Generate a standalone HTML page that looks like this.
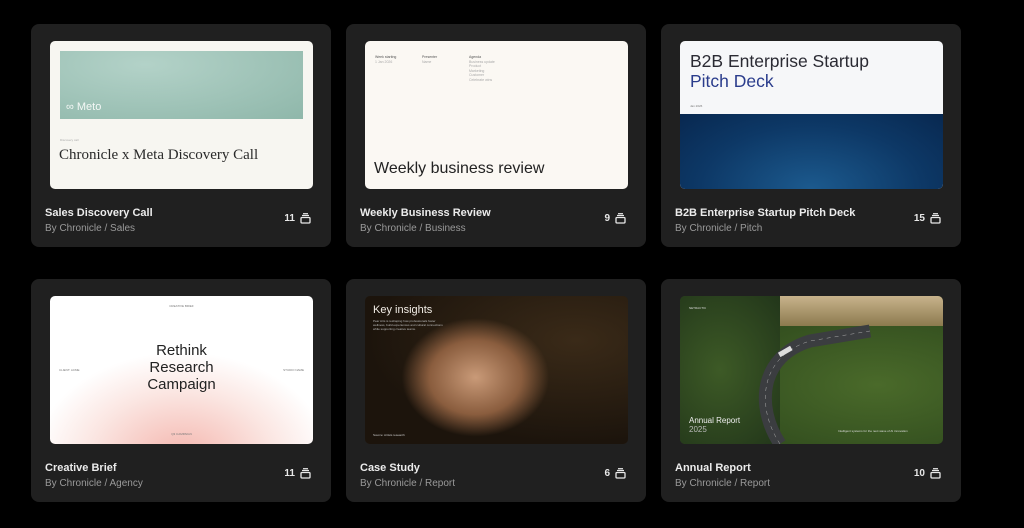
<!DOCTYPE html>
<html><head><meta charset="utf-8"><style>
*{margin:0;padding:0;box-sizing:border-box}
body{width:1024px;height:528px;background:#000;font-family:"Liberation Sans",sans-serif;position:relative;overflow:hidden}
.card{position:absolute;width:300px;height:223px;background:#202020;border-radius:8px}
.th{position:absolute;left:19px;top:17px;width:263px;height:148px;border-radius:5px;overflow:hidden}
.t{position:absolute;left:14px;top:183px;color:#ececec;font-size:11px;font-weight:bold}
.s{position:absolute;left:14px;top:199px;color:#9a9a9a;font-size:10px}
.n{position:absolute;right:20px;top:189px;color:#e8e8e8;font-size:10px;font-weight:bold;display:flex;align-items:center;gap:5px}
.abs{position:absolute}
</style></head><body>
<svg width="0" height="0" style="position:absolute"><defs><g id="ic"><rect x="1" y="4.5" width="9" height="5.5" rx="1" fill="none" stroke="#e8e8e8" stroke-width="1.3"/><line x1="2" y1="2.5" x2="9" y2="2.5" stroke="#e8e8e8" stroke-width="1.2"/><line x1="3" y1="0.7" x2="8" y2="0.7" stroke="#e8e8e8" stroke-width="1.2"/></g></defs></svg>

<div class="card" style="left:31px;top:24px">
 <div class="th" style="background:#f7f6f1">
  <div class="abs" style="left:10px;top:10px;width:243px;height:68px;background:radial-gradient(ellipse at 35% 20%,#b3d2c8,#8fb7aa)"></div>
  <div class="abs" style="left:16px;top:60px;color:#f4f8f6;font-size:11px">∞ Meto</div>
  <div class="abs" style="left:10px;top:97px;color:#aaa;font-size:3px">Discovery call</div>
  <div class="abs" style="left:9px;top:106px;color:#2a2a2a;font-size:15px;font-family:'Liberation Serif',serif;white-space:nowrap">Chronicle x Meta Discovery Call</div>
 </div>
 <div class="t">Sales Discovery Call</div><div class="s">By Chronicle / Sales</div>
 <div class="n">11 <svg width="11" height="11"><use href="#ic"/></svg></div>
</div>

<div class="card" style="left:346px;top:24px">
 <div class="th" style="background:#fbf8f3">
  <div class="abs" style="left:10px;top:14px;font-size:3.5px;color:#555;line-height:4.5px">Week starting<br><span style="color:#aaa">1 Jan 2026</span></div>
  <div class="abs" style="left:57px;top:14px;font-size:3.5px;color:#555;line-height:4.5px">Presenter<br><span style="color:#aaa">Name</span></div>
  <div class="abs" style="left:104px;top:14px;font-size:3.5px;color:#555;line-height:4.5px">Agenda<br><span style="color:#aaa">Business update<br>Product<br>Marketing<br>Customer<br>Celebrate wins</span></div>
  <div class="abs" style="left:9px;top:119px;color:#222;font-size:16px;white-space:nowrap">Weekly business review</div>
 </div>
 <div class="t">Weekly Business Review</div><div class="s">By Chronicle / Business</div>
 <div class="n">9 <svg width="11" height="11"><use href="#ic"/></svg></div>
</div>

<div class="card" style="left:661px;top:24px">
 <div class="th" style="background:#f6f7f9">
  <div class="abs" style="left:0;top:73px;width:263px;height:75px;background:radial-gradient(ellipse at 50% 100%,#1c5a8e,#0d3866 60%,#082850)"></div>
  <div class="abs" style="left:10px;top:10px;font-size:17.5px;line-height:20px;color:#2a2a33;white-space:nowrap">B2B Enterprise Startup<br><span style="color:#2a3c8c">Pitch Deck</span></div>
  <div class="abs" style="left:10px;top:63px;font-size:3px;color:#777">Jan 2026</div>
 </div>
 <div class="t">B2B Enterprise Startup Pitch Deck</div><div class="s">By Chronicle / Pitch</div>
 <div class="n">15 <svg width="11" height="11"><use href="#ic"/></svg></div>
</div>

<div class="card" style="left:31px;top:279px">
 <div class="th" style="background:radial-gradient(ellipse 70% 90% at 50% 110%,#f4b5ad,#fbe6e2 50%,#fff 80%)">
  <div class="abs" style="left:0;width:263px;top:46px;text-align:center;color:#222;font-size:15px;line-height:17px">Rethink<br>Research<br>Campaign</div>
  <div class="abs" style="left:0;width:263px;top:8px;text-align:center;font-size:3px;color:#777">CREATIVE BRIEF</div>
  <div class="abs" style="left:9px;top:72px;font-size:3px;color:#777">CLIENT: ACME</div>
  <div class="abs" style="right:9px;top:72px;font-size:3px;color:#777">STUDIO NAME</div>
  <div class="abs" style="left:0;width:263px;top:136px;text-align:center;font-size:3px;color:#777">Q3 CAMPAIGN</div>
 </div>
 <div class="t">Creative Brief</div><div class="s">By Chronicle / Agency</div>
 <div class="n">11 <svg width="11" height="11"><use href="#ic"/></svg></div>
</div>

<div class="card" style="left:346px;top:279px">
 <div class="th" style="background:#2a1e12">
  <div class="abs" style="left:0;top:0;width:263px;height:148px;background:radial-gradient(ellipse 35% 50% at 42% 55%,#c99a78,#8a5d3e 50%,transparent 80%),radial-gradient(ellipse at 80% 30%,#3a2a18,#1c140c 70%)"></div>
  <div class="abs" style="left:8px;top:8px;color:#f2ede6;font-size:11px">Key insights</div>
  <div class="abs" style="left:8px;top:23px;width:75px;color:#bbb;font-size:3px;line-height:4px">Pear Arts is reshaping how professionals foster wellness, build experiences and cultural connections while supporting creative teams.</div>
  <div class="abs" style="left:8px;top:137px;color:#ccc;font-size:3px">Source: Artists research</div>
 </div>
 <div class="t">Case Study</div><div class="s">By Chronicle / Report</div>
 <div class="n">6 <svg width="11" height="11"><use href="#ic"/></svg></div>
</div>

<div class="card" style="left:661px;top:279px">
 <div class="th" style="background:radial-gradient(ellipse at 75% 60%,#4a6a2a,#2f4a1d 70%)">
  <div class="abs" style="left:80px;top:0;width:183px;height:30px;background:linear-gradient(#c8b38c,#8c7a4e)"></div>
  <div class="abs" style="left:0;top:0;width:100px;height:148px;background:radial-gradient(ellipse at 40% 50%,#3d5a26,#22361a)"></div>
  <svg class="abs" style="left:0;top:0" width="263" height="148"><path d="M100 148 C75 110 80 60 130 45 L190 35" stroke="#3b3d40" stroke-width="13" fill="none"/><path d="M100 148 C75 110 80 60 130 45 L190 35" stroke="#aaa" stroke-width="0.5" fill="none" stroke-dasharray="4 4"/><rect x="98" y="53" width="14" height="5" fill="#ddd" transform="rotate(-30 105 55)"/></svg>
  <div class="abs" style="left:9px;top:120px;color:#eee;font-size:8px;line-height:9px">Annual Report<br><span style="color:#bbb">2025</span></div>
  <div class="abs" style="left:158px;top:133px;color:#ddd;font-size:3px;white-space:nowrap">Intelligent systems for the next wave of AI innovation</div>
  <div class="abs" style="left:9px;top:10px;color:#ddd;font-size:3px">NETRACTIC</div>
 </div>
 <div class="t">Annual Report</div><div class="s">By Chronicle / Report</div>
 <div class="n">10 <svg width="11" height="11"><use href="#ic"/></svg></div>
</div>
</body></html>
